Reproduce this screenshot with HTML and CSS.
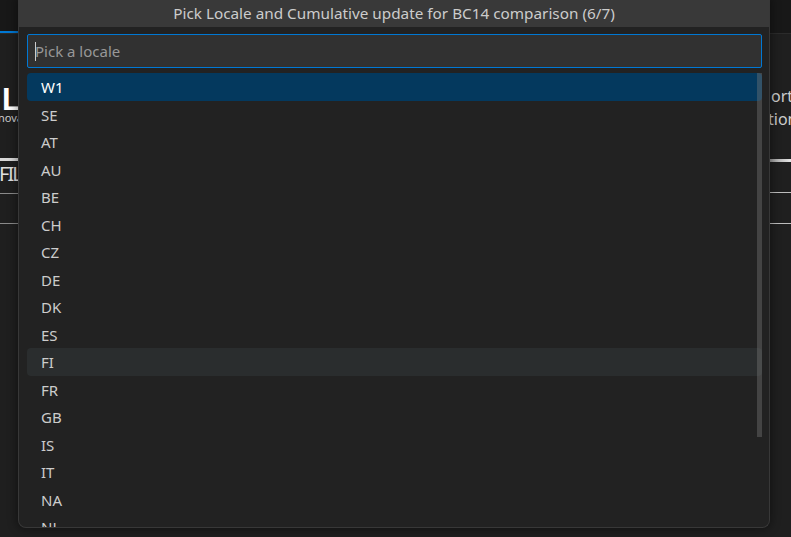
FILE: index.html
```html
<!DOCTYPE html>
<html lang="en">
<head>
<meta charset="utf-8">
<title>Pick Locale</title>
<link rel="stylesheet" href="styles.css">
</head>
<body>
<div class="workbench">
  <div class="tabs">
    <div class="tab-active"></div>
  </div>
  <div class="editor">
    <div class="strip strip-left">
      <div class="logo">LT</div>
      <div class="tagline">nova</div>
      <div class="rule-thick"></div>
      <div class="filter">FIL</div>
      <div class="rule-thin"></div>
      <div class="rule-thin rule-gap"></div>
    </div>
    <div class="strip strip-right">
      <div class="side-text side-first">ort</div>
      <div class="side-text side-second">tion</div>
      <div class="rule-thick rule-thick-right"></div>
      <div class="rule-thin rule-light"></div>
      <div class="rule-thin rule-light"></div>
    </div>
  </div>
</div>

<div class="quick-input">
  <div class="qi-title">Pick Locale and Cumulative update for BC14 comparison (6/7)</div>
  <div class="qi-header">
    <div class="qi-box"><span class="caret"></span><span class="placeholder">Pick a locale</span></div>
  </div>
  <div class="qi-list">
    <div class="row selected">W1</div>
    <div class="row">SE</div>
    <div class="row">AT</div>
    <div class="row">AU</div>
    <div class="row">BE</div>
    <div class="row">CH</div>
    <div class="row">CZ</div>
    <div class="row">DE</div>
    <div class="row">DK</div>
    <div class="row">ES</div>
    <div class="row hover">FI</div>
    <div class="row">FR</div>
    <div class="row">GB</div>
    <div class="row">IS</div>
    <div class="row">IT</div>
    <div class="row">NA</div>
    <div class="row">NL</div>
    <div class="row">NO</div>
    <div class="scrollbar"></div>
  </div>
</div>
</body>
</html>
```

FILE: styles.css
```css
* { box-sizing: border-box; }
html, body {
  margin: 0;
  padding: 0;
  width: 791px;
  height: 537px;
  overflow: hidden;
  background: #1f1f1f;
  font-family: "Noto Sans", "Open Sans", sans-serif;
  color: #cccccc;
}
.workbench {
  display: flex;
  flex-direction: column;
  height: 537px;
}
.tabs {
  height: 34px;
  flex-shrink: 0;
  background: #181818;
  border-bottom: 1px solid #2b2b2b;
  display: flex;
  align-items: flex-end;
}
.tab-active {
  width: 40px;
  height: 2px;
  background: #0078d4;
  margin-bottom: 0;
}
.editor {
  flex: 1;
  display: flex;
  justify-content: space-between;
}
.strip {
  overflow: hidden;
  display: flex;
  flex-direction: column;
}
.strip-left { width: 18px; }
.strip-right { width: 21px; }
.logo {
  margin-top: 53px;
  margin-left: 2px;
  font-family: "Liberation Sans", sans-serif;
  font-weight: bold;
  font-size: 31px;
  line-height: 25px;
  height: 25px;
  color: #ffffff;
  white-space: nowrap;
}
.tagline {
  margin-left: -2px;
  font-size: 11px;
  line-height: 12px;
  color: #cccccc;
  white-space: nowrap;
}
.rule-thick {
  margin-top: 34px;
  height: 3px;
  flex-shrink: 0;
  background: #d8d8d8;
}
.filter {
  margin-left: -1px;
  font-size: 20px;
  letter-spacing: -2px;
  line-height: 26px;
  height: 26px;
  color: #e0e0e0;
  white-space: nowrap;
}
.rule-thin {
  margin-top: 6px;
  height: 1px;
  background: #8a8a8a;
  flex-shrink: 0;
}
.rule-gap { margin-top: 29px; }
.side-text {
  font-size: 16px;
  line-height: 23px;
  color: #cccccc;
  white-space: nowrap;
  margin-left: 1px;
}
.side-first { margin-top: 51px; }
.side-second { margin-left: -2px; }
.rule-thick-right {
  margin-top: 28px;
  background: linear-gradient(90deg, #9a9a9a, #e6e6e6);
}
.rule-light {
  background: #bdbdbd;
  margin-top: 30px;
}

/* Quick input overlay */
.quick-input {
  position: absolute;
  left: 18px;
  top: 0;
  width: 752px;
  height: 528px;
  background: #222222;
  border: 1px solid #383838;
  border-top: none;
  border-radius: 0 0 8px 8px;
  box-shadow: 0 0 8px 2px rgba(0, 0, 0, 0.36);
  display: flex;
  flex-direction: column;
  overflow: hidden;
}
.qi-title {
  height: 27px;
  flex-shrink: 0;
  background: #393939;
  color: #cccccc;
  font-size: 15.3px;
  line-height: 27px;
  text-align: center;
  white-space: nowrap;
}
.qi-header {
  padding: 7px 7px 0 8px;
  flex-shrink: 0;
}
.qi-box {
  height: 34px;
  background: #313131;
  border: 1px solid #0078d4;
  border-radius: 2px;
  display: flex;
  align-items: center;
  padding-left: 7px;
}
.caret {
  width: 1px;
  height: 19px;
  background: #cccccc;
  margin-right: -1px;
}
.placeholder {
  color: #989898;
  font-size: 15px;
}
.qi-list {
  position: relative;
  margin: 5px 7px 0 8px;
  flex: 1;
  overflow: hidden;
}
.row {
  height: 27.5px;
  line-height: 28.5px;
  padding-left: 14px;
  font-size: 15px;
  color: #cccccc;
  border-radius: 4px;
}
.row.selected {
  background: #04395e;
  color: #ffffff;
}
.row.hover {
  background: #2a2d2e;
}
.scrollbar {
  position: absolute;
  top: 0;
  right: -7px;
  width: 12px;
  height: 364px;
  background: rgba(121, 121, 121, 0.4);
}
```
